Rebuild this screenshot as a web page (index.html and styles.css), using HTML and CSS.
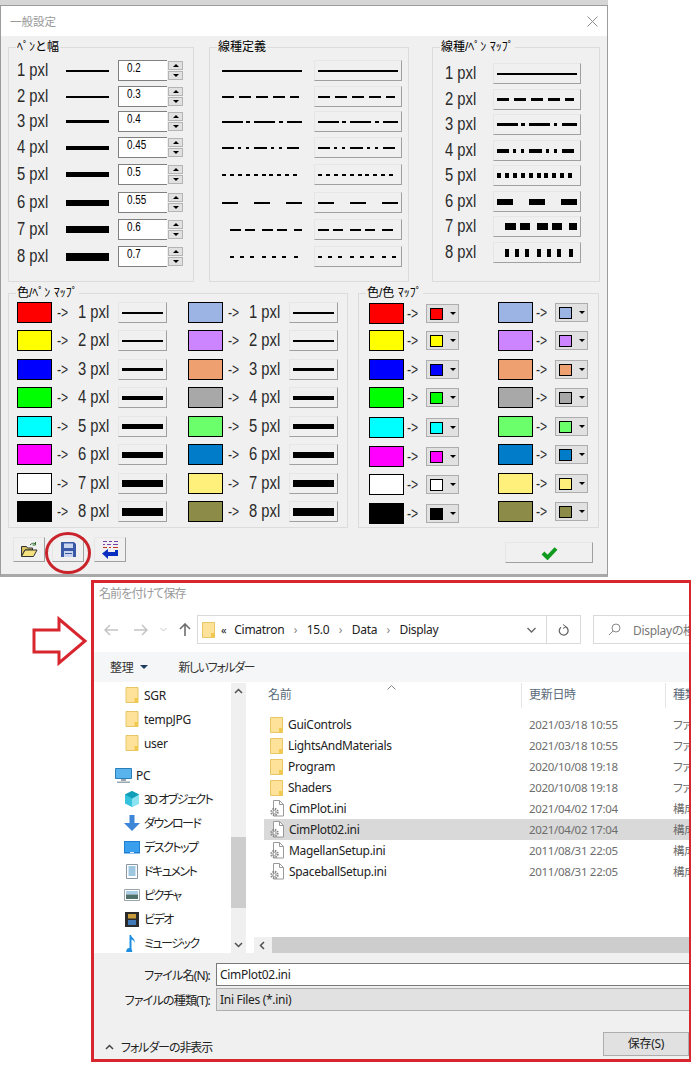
FILE: index.html
```html
<!DOCTYPE html>
<html lang="ja">
<head>
    <meta charset="UTF-8">
    <title>一般設定</title>
    <link rel="stylesheet" href="styles.css">
</head>
<body>
    <svg class="defs" width="0" height="0">
        <symbol id="folder" viewBox="0 0 13 16">
            <path d="M.5.5h12v15H.5z" fill="#ffe29a" stroke="#e8c565"/>
            <path d="M9 11h3.500v4.500H9z" fill="#f2c94f"/>
        </symbol>
        <symbol id="inifile" viewBox="0 0 14 17">
            <path d="M3.500.5h6l4 4v11.500h-10z" fill="#fff" stroke="#9a9a9a"/>
            <path d="M9.500.5v4h4" fill="none" stroke="#9a9a9a"/>
            <circle cx="4.500" cy="12" r="3.200" fill="none" stroke="#8a8a8a" stroke-width="2" stroke-dasharray="1.500 1"/>
            <circle cx="4.500" cy="12" r="1.600" fill="#fff" stroke="#9a9a9a"/>
        </symbol>
    </svg>

    <div class="top-strip"></div>

    <div class="dialog">
        <div class="dialog-title">
            <span>一般設定</span>
            <svg class="close" width="11" height="11" viewBox="0 0 11 11"><path d="M.5.500l10 10M10.500.5l-10 10" stroke="#8c8c8c" fill="none"/></svg>
        </div>

        <div class="group-row">
            <div class="group pen-group">
                <span class="group-title">ﾍﾟﾝと幅</span>
                <div class="rows rows-a">
                    <div class="pen-row"><span class="pxl">1 pxl</span><i class="ln pen w2"></i><div class="spin"><span class="spin-val">0.2</span></div><div class="spin-btns"><b class="up"></b><b class="down"></b></div></div>
                    <div class="pen-row"><span class="pxl">2 pxl</span><i class="ln pen w2"></i><div class="spin"><span class="spin-val">0.3</span></div><div class="spin-btns"><b class="up"></b><b class="down"></b></div></div>
                    <div class="pen-row"><span class="pxl">3 pxl</span><i class="ln pen w3"></i><div class="spin"><span class="spin-val">0.4</span></div><div class="spin-btns"><b class="up"></b><b class="down"></b></div></div>
                    <div class="pen-row"><span class="pxl">4 pxl</span><i class="ln pen w4"></i><div class="spin"><span class="spin-val">0.45</span></div><div class="spin-btns"><b class="up"></b><b class="down"></b></div></div>
                    <div class="pen-row"><span class="pxl">5 pxl</span><i class="ln pen w5"></i><div class="spin"><span class="spin-val">0.5</span></div><div class="spin-btns"><b class="up"></b><b class="down"></b></div></div>
                    <div class="pen-row"><span class="pxl">6 pxl</span><i class="ln pen w6"></i><div class="spin"><span class="spin-val">0.55</span></div><div class="spin-btns"><b class="up"></b><b class="down"></b></div></div>
                    <div class="pen-row"><span class="pxl">7 pxl</span><i class="ln pen w7"></i><div class="spin"><span class="spin-val">0.6</span></div><div class="spin-btns"><b class="up"></b><b class="down"></b></div></div>
                    <div class="pen-row"><span class="pxl">8 pxl</span><i class="ln pen w8"></i><div class="spin"><span class="spin-val">0.7</span></div><div class="spin-btns"><b class="up"></b><b class="down"></b></div></div>
                </div>
            </div>

            <div class="group type-group">
                <span class="group-title">線種定義</span>
                <div class="rows rows-a">
                    <div class="type-row"><span class="type-line"><i class="ln w2 s1"></i></span><div class="btn line-btn"><i class="ln w2 s1"></i></div></div>
                    <div class="type-row"><span class="type-line"><i class="ln w2 s2"></i></span><div class="btn line-btn"><i class="ln w2 s2"></i></div></div>
                    <div class="type-row"><span class="type-line"><i class="ln w2 s3"></i></span><div class="btn line-btn"><i class="ln w2 s3"></i></div></div>
                    <div class="type-row"><span class="type-line"><i class="ln w2 s4"></i></span><div class="btn line-btn"><i class="ln w2 s4"></i></div></div>
                    <div class="type-row"><span class="type-line"><i class="ln w2 s5"></i></span><div class="btn line-btn"><i class="ln w2 s5"></i></div></div>
                    <div class="type-row"><span class="type-line"><i class="ln w2 s6"></i></span><div class="btn line-btn"><i class="ln w2 s6"></i></div></div>
                    <div class="type-row"><span class="type-line"><i class="ln w2 s7 inset"></i></span><div class="btn line-btn"><i class="ln w2 s7"></i></div></div>
                    <div class="type-row"><span class="type-line"><i class="ln w2 s8 inset"></i></span><div class="btn line-btn"><i class="ln w2 s8"></i></div></div>
                </div>
            </div>

            <div class="group map-type-group">
                <span class="group-title">線種/ﾍﾟﾝ ﾏｯﾌﾟ</span>
                <div class="rows rows-b">
                    <div class="map-type-row"><span class="pxl">1 pxl</span><div class="btn line-btn"><i class="ln w2 s1"></i></div></div>
                    <div class="map-type-row"><span class="pxl">2 pxl</span><div class="btn line-btn"><i class="ln w3 s2"></i></div></div>
                    <div class="map-type-row"><span class="pxl">3 pxl</span><div class="btn line-btn"><i class="ln w3 s3"></i></div></div>
                    <div class="map-type-row"><span class="pxl">4 pxl</span><div class="btn line-btn"><i class="ln w4 s4"></i></div></div>
                    <div class="map-type-row"><span class="pxl">5 pxl</span><div class="btn line-btn"><i class="ln w5 s5"></i></div></div>
                    <div class="map-type-row"><span class="pxl">6 pxl</span><div class="btn line-btn"><i class="ln w6 s6"></i></div></div>
                    <div class="map-type-row"><span class="pxl">7 pxl</span><div class="btn line-btn"><i class="ln w7 s7 inset"></i></div></div>
                    <div class="map-type-row"><span class="pxl">8 pxl</span><div class="btn line-btn"><i class="ln w8 s8 inset"></i></div></div>
                </div>
            </div>
        </div>

        <div class="group-row">
            <div class="group color-group">
                <span class="group-title">色/ﾍﾟﾝ ﾏｯﾌﾟ</span>
                <div class="color-cols">
                    <div class="rows rows-c">
                        <div class="color-row"><i class="swatch c-red"></i><span class="arrow">-&gt;</span><span class="pxl">1 pxl</span><div class="btn map-btn"><i class="ln map-line w2"></i></div></div>
                        <div class="color-row"><i class="swatch c-yellow"></i><span class="arrow">-&gt;</span><span class="pxl">2 pxl</span><div class="btn map-btn"><i class="ln map-line w2"></i></div></div>
                        <div class="color-row"><i class="swatch c-blue"></i><span class="arrow">-&gt;</span><span class="pxl">3 pxl</span><div class="btn map-btn"><i class="ln map-line w3"></i></div></div>
                        <div class="color-row"><i class="swatch c-green"></i><span class="arrow">-&gt;</span><span class="pxl">4 pxl</span><div class="btn map-btn"><i class="ln map-line w4"></i></div></div>
                        <div class="color-row"><i class="swatch c-cyan"></i><span class="arrow">-&gt;</span><span class="pxl">5 pxl</span><div class="btn map-btn"><i class="ln map-line w5"></i></div></div>
                        <div class="color-row"><i class="swatch c-magenta"></i><span class="arrow">-&gt;</span><span class="pxl">6 pxl</span><div class="btn map-btn"><i class="ln map-line w6"></i></div></div>
                        <div class="color-row"><i class="swatch c-white"></i><span class="arrow">-&gt;</span><span class="pxl">7 pxl</span><div class="btn map-btn"><i class="ln map-line w7"></i></div></div>
                        <div class="color-row"><i class="swatch c-black"></i><span class="arrow">-&gt;</span><span class="pxl">8 pxl</span><div class="btn map-btn"><i class="ln map-line w8"></i></div></div>
                    </div>
                    <div class="rows rows-c">
                        <div class="color-row"><i class="swatch c-steel"></i><span class="arrow">-&gt;</span><span class="pxl">1 pxl</span><div class="btn map-btn"><i class="ln map-line w2"></i></div></div>
                        <div class="color-row"><i class="swatch c-violet"></i><span class="arrow">-&gt;</span><span class="pxl">2 pxl</span><div class="btn map-btn"><i class="ln map-line w2"></i></div></div>
                        <div class="color-row"><i class="swatch c-salmon"></i><span class="arrow">-&gt;</span><span class="pxl">3 pxl</span><div class="btn map-btn"><i class="ln map-line w3"></i></div></div>
                        <div class="color-row"><i class="swatch c-gray"></i><span class="arrow">-&gt;</span><span class="pxl">4 pxl</span><div class="btn map-btn"><i class="ln map-line w4"></i></div></div>
                        <div class="color-row"><i class="swatch c-lime"></i><span class="arrow">-&gt;</span><span class="pxl">5 pxl</span><div class="btn map-btn"><i class="ln map-line w5"></i></div></div>
                        <div class="color-row"><i class="swatch c-azure"></i><span class="arrow">-&gt;</span><span class="pxl">6 pxl</span><div class="btn map-btn"><i class="ln map-line w6"></i></div></div>
                        <div class="color-row"><i class="swatch c-cream"></i><span class="arrow">-&gt;</span><span class="pxl">7 pxl</span><div class="btn map-btn"><i class="ln map-line w7"></i></div></div>
                        <div class="color-row"><i class="swatch c-olive"></i><span class="arrow">-&gt;</span><span class="pxl">8 pxl</span><div class="btn map-btn"><i class="ln map-line w8"></i></div></div>
                    </div>
                </div>
            </div>

            <div class="group color2-group">
                <span class="group-title">色/色 ﾏｯﾌﾟ</span>
                <div class="color2-cols">
                    <div class="rows rows-d">
                        <div class="color2-row"><i class="swatch c-red"></i><span class="arrow">-&gt;</span><div class="drop"><i class="mini c-red"></i><b class="down"></b></div></div>
                        <div class="color2-row"><i class="swatch c-yellow"></i><span class="arrow">-&gt;</span><div class="drop"><i class="mini c-yellow"></i><b class="down"></b></div></div>
                        <div class="color2-row"><i class="swatch c-blue"></i><span class="arrow">-&gt;</span><div class="drop"><i class="mini c-blue"></i><b class="down"></b></div></div>
                        <div class="color2-row"><i class="swatch c-green"></i><span class="arrow">-&gt;</span><div class="drop"><i class="mini c-green"></i><b class="down"></b></div></div>
                        <div class="color2-row"><i class="swatch c-cyan"></i><span class="arrow">-&gt;</span><div class="drop"><i class="mini c-cyan"></i><b class="down"></b></div></div>
                        <div class="color2-row"><i class="swatch c-magenta"></i><span class="arrow">-&gt;</span><div class="drop"><i class="mini c-magenta"></i><b class="down"></b></div></div>
                        <div class="color2-row"><i class="swatch c-white"></i><span class="arrow">-&gt;</span><div class="drop"><i class="mini c-white"></i><b class="down"></b></div></div>
                        <div class="color2-row"><i class="swatch c-black"></i><span class="arrow">-&gt;</span><div class="drop"><i class="mini c-black"></i><b class="down"></b></div></div>
                    </div>
                    <div class="rows rows-c">
                        <div class="color2-row"><i class="swatch c-steel"></i><span class="arrow">-&gt;</span><div class="drop"><i class="mini c-steel"></i><b class="down"></b></div></div>
                        <div class="color2-row"><i class="swatch c-violet"></i><span class="arrow">-&gt;</span><div class="drop"><i class="mini c-violet"></i><b class="down"></b></div></div>
                        <div class="color2-row"><i class="swatch c-salmon"></i><span class="arrow">-&gt;</span><div class="drop"><i class="mini c-salmon"></i><b class="down"></b></div></div>
                        <div class="color2-row"><i class="swatch c-gray"></i><span class="arrow">-&gt;</span><div class="drop"><i class="mini c-gray"></i><b class="down"></b></div></div>
                        <div class="color2-row"><i class="swatch c-lime"></i><span class="arrow">-&gt;</span><div class="drop"><i class="mini c-lime"></i><b class="down"></b></div></div>
                        <div class="color2-row"><i class="swatch c-azure"></i><span class="arrow">-&gt;</span><div class="drop"><i class="mini c-azure"></i><b class="down"></b></div></div>
                        <div class="color2-row"><i class="swatch c-cream"></i><span class="arrow">-&gt;</span><div class="drop"><i class="mini c-cream"></i><b class="down"></b></div></div>
                        <div class="color2-row"><i class="swatch c-olive"></i><span class="arrow">-&gt;</span><div class="drop"><i class="mini c-olive"></i><b class="down"></b></div></div>
                    </div>
                </div>
            </div>
        </div>

        <div class="dialog-footer">
            <div class="btn tool-btn">
                <svg width="18" height="16" viewBox="0 0 18 16"><path d="M1.500 4.500h5l1 1.500h5v2H5L1.500 14z" fill="#d8c260" stroke="#333"/><path d="M1.500 14.500L5 8h12l-3.500 6.500z" fill="#f5e27e" stroke="#333"/><path d="M10 3c1.500-1.800 3.500-2 5-1.500M15.500 0v3h-3" fill="none" stroke="#2f6b2f"/></svg>
            </div>
            <div class="btn tool-btn tool-save">
                <svg width="15" height="15" viewBox="0 0 15 15"><path d="M0 0h13l2 2v13H0z" fill="#3a5aa8"/><path d="M3 1.500h9v4.500H3zM3 9h9v6H3z" fill="#c9d4ee"/><path d="M4 11h7v1H4z" fill="#3a5aa8"/></svg>
            </div>
            <div class="btn tool-btn tool-map">
                <svg width="17" height="18" viewBox="0 0 17 18"><path d="M1 .5h4M7 .5h3M12 .5h4M1 3.500h2M5 3.500h4M11 3.500h5" stroke="#7a3fa8" fill="none"/><path d="M1 6.500h4M7 6.500h2M11 6.500h5" stroke="#c0392b" fill="none"/><path d="M16 9v6H6v3L0 12.500 6 8v3h7V9z" fill="#0a2fc0"/></svg>
            </div>
            <div class="btn ok-btn">
                <svg width="17" height="14" viewBox="0 0 17 14"><path d="M2 7l4.500 4.500L15 2.500" fill="none" stroke="#109a20" stroke-width="4"/></svg>
            </div>
        </div>
    </div>

    <svg class="red-circle" width="46" height="42" viewBox="0 0 46 42"><ellipse cx="23" cy="21" rx="21.500" ry="19.500" fill="none" stroke="#c9242c" stroke-width="3"/></svg>

    <svg class="red-arrow" width="58" height="50" viewBox="0 0 58 50"><path d="M2 14h25V3l26 22-26 22V36H2z" fill="#fff" stroke="#d8262f" stroke-width="3"/></svg>

    <div class="save">
        <div class="save-title">名前を付けて保存</div>

        <div class="save-nav">
            <svg class="nav-back" width="14" height="12" viewBox="0 0 14 12"><path d="M6 1L1 6l5 5M1 6h13" fill="none" stroke="#c4c4c4" stroke-width="1.500"/></svg>
            <svg class="nav-fwd" width="14" height="12" viewBox="0 0 14 12"><path d="M8 1l5 5-5 5M13 6H0" fill="none" stroke="#c4c4c4" stroke-width="1.500"/></svg>
            <svg class="nav-drop" width="7" height="5" viewBox="0 0 7 5"><path d="M.5 1l3 3 3-3" fill="none" stroke="#c4c4c4"/></svg>
            <svg class="nav-up" width="12" height="13" viewBox="0 0 12 13"><path d="M1 6l5-5 5 5M6 1v12" fill="none" stroke="#6e6e6e" stroke-width="1.600"/></svg>
            <div class="address">
                <svg class="addr-folder" width="13" height="16"><use href="#folder"/></svg>
                <span class="addr-back">«</span>
                <span>Cimatron</span><span class="crumb-sep">›</span><span>15.0</span><span class="crumb-sep">›</span><span>Data</span><span class="crumb-sep">›</span><span>Display</span>
                <svg class="addr-chev" width="9" height="6" viewBox="0 0 9 6"><path d="M.5 1l4 4 4-4" fill="none" stroke="#666" stroke-width="1.300"/></svg>
                <div class="addr-refresh">
                    <svg width="11" height="12" viewBox="0 0 11 12"><path d="M3 3.200a4.400 4.400 0 1 0 4.500-.5" fill="none" stroke="#666" stroke-width="1.300"/><path d="M5 .5l3 2.200-3 1.800" fill="none" stroke="#666"/></svg>
                </div>
            </div>
            <div class="search">
                <svg width="13" height="13" viewBox="0 0 13 13"><circle cx="8" cy="5" r="4" fill="none" stroke="#888"/><path d="M5 8l-4 4" stroke="#888" fill="none"/></svg>
                <span>Displayの検索</span>
            </div>
        </div>

        <div class="save-tools">
            <span class="tool-item">整理</span><i class="tool-caret"></i>
            <span class="tool-new">新しいフォルダー</span>
        </div>

        <div class="panes">
            <div class="side">
                <div class="side-list">
                    <div class="side-item sub"><svg width="13" height="16"><use href="#folder"/></svg><span>SGR</span></div>
                    <div class="side-item sub"><svg width="13" height="16"><use href="#folder"/></svg><span>tempJPG</span></div>
                    <div class="side-item sub"><svg width="13" height="16"><use href="#folder"/></svg><span>user</span></div>
                    <div class="side-item pc">
                        <svg width="17" height="15" viewBox="0 0 17 15"><path d="M.5.5h16v10H.5z" fill="#59b4ee" stroke="#2a7fb8"/><path d="M6 11h5v2H6zM2 13.500h13V15H2z" fill="#9aa7b0"/></svg>
                        <span>PC</span>
                    </div>
                    <div class="side-item sub">
                        <svg width="16" height="16" viewBox="0 0 16 16"><path d="M8 0l7 3.500v9L8 16l-7-3.500v-9z" fill="#35c3dc"/><path d="M8 7.500L15 3.500v9L8 16z" fill="#8be2f0"/><path d="M8 7.500L1 3.500 8 0l7 3.500z" fill="#129db8"/></svg>
                        <span class="kana">3D オブジェクト</span>
                    </div>
                    <div class="side-item sub">
                        <svg width="16" height="16" viewBox="0 0 16 16"><path d="M5.500 0h5v8H16l-8 8-8-8h5.500z" fill="#3d85d6"/></svg>
                        <span class="kana">ダウンロード</span>
                    </div>
                    <div class="side-item sub">
                        <svg width="16" height="13" viewBox="0 0 16 13"><path d="M0 0h16v12.500H0z" fill="#1b7fd4"/><path d="M1 1h14v10H1z" fill="#3aa0ee"/><path d="M6 11h4v1H6z" fill="#dfefff"/></svg>
                        <span class="kana">デスクトップ</span>
                    </div>
                    <div class="side-item sub">
                        <svg width="16" height="15" viewBox="0 0 16 15"><path d="M2.500.5h11v14h-11z" fill="#fff" stroke="#8a96a0"/><path d="M4.500 3h7M4.500 5h7M4.500 7h7M4.500 9h7M4.500 11h7" stroke="#3f8fc0" fill="none"/></svg>
                        <span class="kana">ドキュメント</span>
                    </div>
                    <div class="side-item sub">
                        <svg width="16" height="12" viewBox="0 0 16 12"><path d="M.5.5h15v11H.5z" fill="#fff" stroke="#9aa3aa"/><path d="M2 2h12v3.500H2z" fill="#a9cde6"/><path d="M2 5.500h12V10H2z" fill="#4f6f6a"/></svg>
                        <span class="kana">ピクチャ</span>
                    </div>
                    <div class="side-item sub">
                        <svg width="16" height="15" viewBox="0 0 16 15"><path d="M1 0h14v15H1z" fill="#2a2a2a"/><path d="M4 2h8v4.500H4z" fill="#c89a3a"/><path d="M4 8h8v5H4z" fill="#3f79b8"/></svg>
                        <span class="kana">ビデオ</span>
                    </div>
                    <div class="side-item sub">
                        <svg width="16" height="17" viewBox="0 0 16 17"><path d="M5.500 13V0h1.500c.5 3 4.500 3.500 3.500 8-.5-2.500-1.500-3-3-3.500V14a3 3 0 1 1-2-1z" fill="#1e8fe0"/></svg>
                        <span class="kana">ミュージック</span>
                    </div>
                </div>
                <div class="vscroll">
                    <svg class="sb-up" width="9" height="6" viewBox="0 0 9 6"><path d="M1 5l3.500-3.500L8 5" fill="none" stroke="#505050" stroke-width="1.500"/></svg>
                    <div class="vthumb"></div>
                    <svg class="sb-down" width="9" height="6" viewBox="0 0 9 6"><path d="M1 1l3.500 3.500L8 1" fill="none" stroke="#505050" stroke-width="1.500"/></svg>
                </div>
            </div>

            <div class="main">
                <div class="list-head">
                    <span class="col-name">名前</span>
                    <svg class="sort-caret" width="9" height="5" viewBox="0 0 9 5"><path d="M.5 4.500l4-4 4 4" fill="none" stroke="#888"/></svg>
                    <span class="col-date">更新日時</span>
                    <span class="col-type">種類</span>
                </div>
                <div class="file-list">
                    <div class="file"><span class="col-name"><svg width="13" height="16"><use href="#folder"/></svg>GuiControls</span><span class="col-date">2021/03/18 10:55</span><span class="col-type">ファイル フォルダー</span></div>
                    <div class="file"><span class="col-name"><svg width="13" height="16"><use href="#folder"/></svg>LightsAndMaterials</span><span class="col-date">2021/03/18 10:55</span><span class="col-type">ファイル フォルダー</span></div>
                    <div class="file"><span class="col-name"><svg width="13" height="16"><use href="#folder"/></svg>Program</span><span class="col-date">2020/10/08 19:18</span><span class="col-type">ファイル フォルダー</span></div>
                    <div class="file"><span class="col-name"><svg width="13" height="16"><use href="#folder"/></svg>Shaders</span><span class="col-date">2020/10/08 19:18</span><span class="col-type">ファイル フォルダー</span></div>
                    <div class="file"><span class="col-name"><svg width="14" height="17"><use href="#inifile"/></svg>CimPlot.ini</span><span class="col-date">2021/04/02 17:04</span><span class="col-type">構成設定</span></div>
                    <div class="file selected"><span class="col-name"><svg width="14" height="17"><use href="#inifile"/></svg>CimPlot02.ini</span><span class="col-date">2021/04/02 17:04</span><span class="col-type">構成設定</span></div>
                    <div class="file"><span class="col-name"><svg width="14" height="17"><use href="#inifile"/></svg>MagellanSetup.ini</span><span class="col-date">2011/08/31 22:05</span><span class="col-type">構成設定</span></div>
                    <div class="file"><span class="col-name"><svg width="14" height="17"><use href="#inifile"/></svg>SpaceballSetup.ini</span><span class="col-date">2011/08/31 22:05</span><span class="col-type">構成設定</span></div>
                </div>
                <div class="hscroll">
                    <svg width="6" height="9" viewBox="0 0 6 9"><path d="M5 1L1.500 4.500 5 8" fill="none" stroke="#505050" stroke-width="1.500"/></svg>
                    <div class="hthumb"></div>
                </div>
            </div>
        </div>

        <div class="save-bottom">
            <div class="field">
                <label class="field-label">ファイル名(N):</label>
                <div class="field-input">CimPlot02.ini</div>
            </div>
            <div class="field">
                <label class="field-label">ファイルの種類(T):</label>
                <div class="field-select">Ini Files (*.ini)</div>
            </div>
            <div class="bottom-row">
                <div class="hide-folders">
                    <svg width="9" height="6" viewBox="0 0 9 6"><path d="M1 5l3.500-3.500L8 5" fill="none" stroke="#444" stroke-width="1.500"/></svg>
                    <span>フォルダーの非表示</span>
                </div>
                <div class="save-btn">保存(S)</div>
            </div>
        </div>
    </div>
</body>
</html>
```

FILE: styles.css
```css
html, body {
    margin: 0;
    padding: 0;
    background-color: #fff;
}

body {
    position: relative;
    width: 691px;
    height: 1066px;
    overflow: hidden;
    font-family: "Liberation Sans", "Noto Sans CJK JP", sans-serif;
    color: #000;
}

.defs {
    position: absolute;
}

.top-strip {
    width: 608px;
    height: 5px;
    background-color: #d6d6d6;
}

/* plot settings dialog */
.dialog {
    box-sizing: border-box;
    width: 608px;
    height: 572px;
    background-color: #f0f0f0;
    border: 1px solid #9c9c9c;
    border-bottom: 3px solid #a8a8a8;
}

.dialog-title {
    display: flex;
    align-items: center;
    justify-content: space-between;
    height: 30px;
    padding: 0 9px;
    background-color: #fff;
    color: #9a9a9a;
    font-size: 11.5px;
}

.group-row {
    display: flex;
    margin: 11px 0 0 7px;
}

.group {
    position: relative;
    box-sizing: border-box;
    height: 235px;
    border: 1px solid #dcdcdc;
}

.group-title {
    position: absolute;
    top: -9px;
    left: 7px;
    padding: 0 1px;
    background-color: #f0f0f0;
    font-size: 12px;
    line-height: 16px;
    white-space: nowrap;
}

.pen-group { width: 186px; }
.type-group { width: 200px; margin-left: 15px; }
.map-type-group { width: 168px; margin-left: 23px; }
.color-group { width: 340px; }
.color2-group { width: 241px; margin-left: 10px; }

.rows {
    display: grid;
    align-items: start;
}

.rows-a { grid-template-rows: 26px 25px 26px 27px 28px 27px 27px 21px; margin-top: 12px; }
.rows-b { grid-template-rows: 26px 25px 26px 25px 26px 25px 26px 21px; margin-top: 15px; }
.rows-c { grid-template-rows: 28px 29px 28px 29px 28px 29px 28px 21px; margin-top: 8px; }
.rows-d { grid-template-rows: 27px 29px 28px 30px 29px 28px 29px 21px; margin-top: 9px; }

/* no narrow face installed, so the bitmap-like labels are squeezed */
.pxl {
    display: block;
    flex: none;
    font-size: 18px;
    line-height: 21px;
    white-space: nowrap;
    color: #2a2a2a;
    transform: scaleX(0.82);
    transform-origin: left center;
}

.arrow {
    display: block;
    flex: none;
    font-size: 16px;
    line-height: 20px;
    color: #2a2a2a;
    transform: scaleX(0.76);
    transform-origin: left center;
}

/* line samples */
.ln {
    display: block;
    flex: none;
    background-color: #000;
}

.w2 { height: 2px; }
.w3 { height: 3px; }
.w4 { height: 4px; }
.w5 { height: 5px; }
.w6 { height: 6px; }
.w7 { height: 7px; }
.w8 { height: 8px; }

.s1, .s2, .s3, .s4, .s5, .s6, .s7, .s8 { background-color: transparent; width: 80px; }
.s1 { background-color: #000; }
.s2 { width: 77px; background-image: repeating-linear-gradient(90deg, #000 0 12.5px, transparent 12.5px 17px); }
.s3 { background-image: repeating-linear-gradient(90deg, #000 0 21px, transparent 21px 24.5px, #000 24.5px 28px, transparent 28px 32.5px); }
.s4 { width: 77px; background-image: repeating-linear-gradient(90deg, #000 0 12.5px, transparent 12.5px 16.5px, #000 16.5px 19.5px, transparent 19.5px 24.5px, #000 24.5px 27.5px, transparent 27.5px 32.5px); }
.s5 { width: 77px; background-image: repeating-linear-gradient(90deg, #000 0 4px, transparent 4px 7.9px); }
.s6 { background-image: repeating-linear-gradient(90deg, #000 0 16px, transparent 16px 32px); }
.s7 { width: 76px; background-image: repeating-linear-gradient(90deg, #000 0 11.5px, transparent 11.5px 15px, #000 15px 25px, transparent 25px 32px); }
.s8 { background-image: repeating-linear-gradient(90deg, #000 0 4px, transparent 4px 10px, #000 10px 14px, transparent 14px 20px, #000 20px 24px, transparent 24px 32px); }
.s7.inset { width: 72px; margin-left: 8px; }
.s8.inset { width: 68px; margin-left: 8px; }

.btn {
    box-sizing: border-box;
    display: flex;
    align-items: center;
    flex: none;
    background-color: #f0f0f0;
    border: 1px solid;
    border-color: #e6e6e6 #a0a0a0 #a0a0a0 #e6e6e6;
}

.line-btn {
    width: 88px;
    height: 21px;
    padding-left: 3px;
}

.map-btn {
    width: 49px;
    height: 21px;
    padding-left: 3px;
}

.map-line { width: 41px; }

/* pen width rows */
.pen-row {
    display: flex;
    align-items: center;
    padding-left: 8px;
}

.pen-row .pxl { width: 49px; }
.pen { width: 43px; }

.spin {
    box-sizing: border-box;
    width: 49px;
    height: 21px;
    margin-left: 9px;
    padding-left: 8px;
    background-color: #fff;
    border: 1px solid #808080;
    border-right: none;
}

.spin-val {
    display: block;
    font-size: 12px;
    line-height: 15px;
    transform: scaleX(0.82);
    transform-origin: left center;
}

.spin-btns {
    display: flex;
    flex-direction: column;
    gap: 1px;
    margin-left: 1px;
}

.spin-btns b {
    box-sizing: border-box;
    display: flex;
    align-items: center;
    justify-content: center;
    width: 15px;
    height: 9px;
    background-color: #e1e1e1;
    border: 1px solid #b4b4b4;
}

.up::before, .down::before {
    content: "";
    display: block;
    border-left: 3px solid transparent;
    border-right: 3px solid transparent;
}

.up::before { border-bottom: 3px solid #000; }
.down::before { border-top: 3px solid #000; }

.type-row {
    display: flex;
    align-items: center;
    padding-left: 12px;
}

.type-line {
    display: block;
    width: 92px;
}

.map-type-row {
    display: flex;
    align-items: center;
    padding-left: 12px;
}

.map-type-row .pxl { width: 48px; }

/* colour maps */
.swatch {
    box-sizing: border-box;
    display: block;
    flex: none;
    width: 35px;
    height: 21px;
    border: 1px solid #000;
}

.mini {
    box-sizing: border-box;
    display: block;
    width: 13px;
    height: 12px;
    border: 1px solid #000;
}

.c-red { background-color: #ff0000; }
.c-yellow { background-color: #ffff00; }
.c-blue { background-color: #0000ff; }
.c-green { background-color: #00ff00; }
.c-cyan { background-color: #00ffff; }
.c-magenta { background-color: #ff00ff; }
.c-white { background-color: #fff; }
.c-black { background-color: #000; }
.c-steel { background-color: #9bb4e4; }
.c-violet { background-color: #cc84ff; }
.c-salmon { background-color: #eea070; }
.c-gray { background-color: #a8a8a8; }
.c-lime { background-color: #6cff6c; }
.c-azure { background-color: #007cc8; }
.c-cream { background-color: #fff07c; }
.c-olive { background-color: #8c8c48; }

.color-cols {
    display: grid;
    grid-template-columns: 171px 1fr;
}

.color-row {
    display: flex;
    align-items: center;
    padding-left: 8px;
}

.color-row .arrow { width: 21px; margin-left: 5px; }
.color-row .pxl { width: 40px; }

.color2-cols {
    display: grid;
    grid-template-columns: 129px 1fr;
    padding-left: 10px;
}

.color2-row {
    display: flex;
    align-items: center;
}

.color2-row .arrow { width: 19px; margin-left: 3px; }

.drop {
    box-sizing: border-box;
    display: flex;
    align-items: center;
    gap: 7px;
    width: 33px;
    height: 19px;
    padding-left: 3px;
    background-color: #e1e1e1;
    border: 1px solid #adadad;
}

.drop b { display: block; }

.dialog-footer {
    display: flex;
    align-items: flex-start;
    margin: 9px 0 0 12px;
}

.tool-btn {
    justify-content: center;
    width: 32px;
    height: 25px;
}

.tool-save { margin-left: 7px; }
.tool-map { margin-left: 10px; }

.ok-btn {
    justify-content: center;
    width: 88px;
    height: 21px;
    margin: 5px 0 0 379px;
}

/* markers drawn over the shot */
.red-circle {
    position: absolute;
    top: 532px;
    left: 45px;
}

.red-arrow {
    position: absolute;
    top: 616px;
    left: 32px;
}

/* save as dialog */
.save {
    box-sizing: border-box;
    display: flex;
    flex-direction: column;
    width: 600px;
    height: 482px;
    margin: 3px 0 0 91px;
    overflow: hidden;
    background-color: #fff;
    border: 3px solid #d8262f;
    border-right-width: 2px;
    font-family: "Noto Sans", "Noto Sans CJK JP", sans-serif;
    font-size: 12px;
    letter-spacing: -0.3px;
    font-feature-settings: "palt";
    color: #222;
}

.save svg { flex: none; }

.kana { letter-spacing: -1.5px; }

.save-title {
    height: 22px;
    padding-left: 5px;
    line-height: 22px;
    letter-spacing: -0.9px;
    color: #9a9a9a;
}

.save-nav {
    display: flex;
    align-items: center;
    height: 47px;
    box-sizing: border-box;
    padding: 10px 0 8px 0;
}

.nav-back { margin-left: 10px; }
.nav-fwd { margin-left: 16px; }
.nav-drop { margin-left: 12px; }
.nav-up { margin-left: 12px; }

.address {
    box-sizing: border-box;
    display: flex;
    align-items: center;
    flex: none;
    width: 384px;
    height: 29px;
    margin-left: 6px;
    padding-left: 4px;
    border: 1px solid #d9d9d9;
}

.addr-back { margin: 0 8px 0 6px; font-size: 11px; }
.crumb-sep { margin: 0 9.5px; color: #888; }
.addr-chev { margin-left: auto; margin-right: 10px; }

.addr-refresh {
    display: flex;
    align-items: center;
    justify-content: center;
    width: 33px;
    height: 100%;
    border-left: 1px solid #d9d9d9;
}

.search {
    box-sizing: border-box;
    display: flex;
    align-items: center;
    gap: 12px;
    flex: none;
    width: 120px;
    height: 29px;
    margin-left: 12px;
    padding-left: 14px;
    border: 1px solid #d9d9d9;
    white-space: nowrap;
    color: #777;
}

.save-tools {
    display: flex;
    align-items: center;
    flex: none;
    height: 30px;
    padding-left: 16px;
    background-color: #f5f6f7;
    color: #333;
}

.tool-caret {
    width: 0;
    margin-left: 7px;
    border-left: 4px solid transparent;
    border-right: 4px solid transparent;
    border-top: 4px solid #1f3a5c;
}

.tool-new { margin-left: 30px; letter-spacing: -1.4px; }

.panes {
    display: flex;
    flex: none;
    height: 270px;
    margin-top: 1px;
}

.side {
    display: flex;
    flex: none;
    width: 156px;
}

.side-list {
    flex: none;
    width: 137px;
    overflow: hidden;
}

.side-item {
    display: flex;
    align-items: center;
    height: 24px;
    white-space: nowrap;
}

.side-item.sub { padding-left: 30px; }
.side-item.sub svg { width: 16px; margin-right: 4px; }
.side-item.pc { padding-left: 21px; margin-top: 8px; }
.side-item.pc svg { margin-right: 4px; }

.vscroll {
    display: flex;
    flex-direction: column;
    align-items: center;
    flex: none;
    width: 15px;
    background-color: #f0f0f0;
}

.sb-up { margin-top: 5px; }
.sb-down { margin-top: auto; margin-bottom: 5px; }

.vthumb {
    width: 15px;
    height: 71px;
    margin-top: 143px;
    background-color: #cdcdcd;
}

.main {
    display: flex;
    flex-direction: column;
    flex: 1;
    min-width: 0;
}

.list-head {
    position: relative;
    display: grid;
    grid-template-columns: 275px 144px 80px;
    flex: none;
    height: 25px;
    line-height: 24px;
    white-space: nowrap;
    color: #5a6a7a;
    margin-left: -4px;
}

.sort-caret {
    position: absolute;
    top: 2px;
    left: 141px;
}

.list-head .col-name { padding-left: 22px; }
.list-head .col-date,
.list-head .col-type { padding-left: 7px; border-left: 1px solid #e5e5e5; }

.file-list {
    flex: 1;
    padding-top: 6px;
    margin-left: 14px;
}

.file {
    display: grid;
    grid-template-columns: 257px 144px 100px;
    height: 21px;
    line-height: 21px;
    white-space: nowrap;
    overflow: hidden;
}

.file.selected { background-color: #d9d9d9; }

.file .col-name {
    display: flex;
    align-items: center;
    gap: 5px;
    padding-left: 6px;
}

.file .col-date,
.file .col-type {
    padding-left: 8px;
    color: #6d6d6d;
    font-size: 11.5px;
}

.hscroll {
    display: flex;
    align-items: center;
    flex: none;
    height: 16px;
    margin-left: 4px;
    background-color: #f0f0f0;
}

.hscroll svg { margin: 0 7px 0 5px; }
.hthumb { flex: 1; height: 100%; background-color: #cdcdcd; }

.save-bottom {
    flex: 1;
    background-color: #f0f0f0;
    padding-top: 9px;
}

.field {
    display: flex;
    align-items: center;
    height: 25px;
}

.field-label {
    flex: none;
    width: 116px;
    text-align: right;
    letter-spacing: -0.8px;
}

.field-input,
.field-select {
    box-sizing: border-box;
    flex: 1;
    height: 23px;
    margin-left: 6px;
    padding-left: 3px;
    line-height: 21px;
}

.field-input {
    background-color: #fff;
    border: 1px solid #7a7a7a;
    border-right: none;
}

.field-select {
    background-color: #e1e1e1;
    border: 1px solid #adadad;
    border-right: none;
}

.bottom-row {
    display: flex;
    align-items: center;
    justify-content: space-between;
    margin-top: 20px;
    padding-left: 11px;
}

.hide-folders {
    display: flex;
    align-items: center;
    gap: 7px;
    margin-top: 6px;
    letter-spacing: -1.1px;
}

.save-btn {
    box-sizing: border-box;
    width: 86px;
    height: 24px;
    line-height: 22px;
    text-align: center;
    background-color: #e1e1e1;
    border: 1px solid #adadad;
}
```
